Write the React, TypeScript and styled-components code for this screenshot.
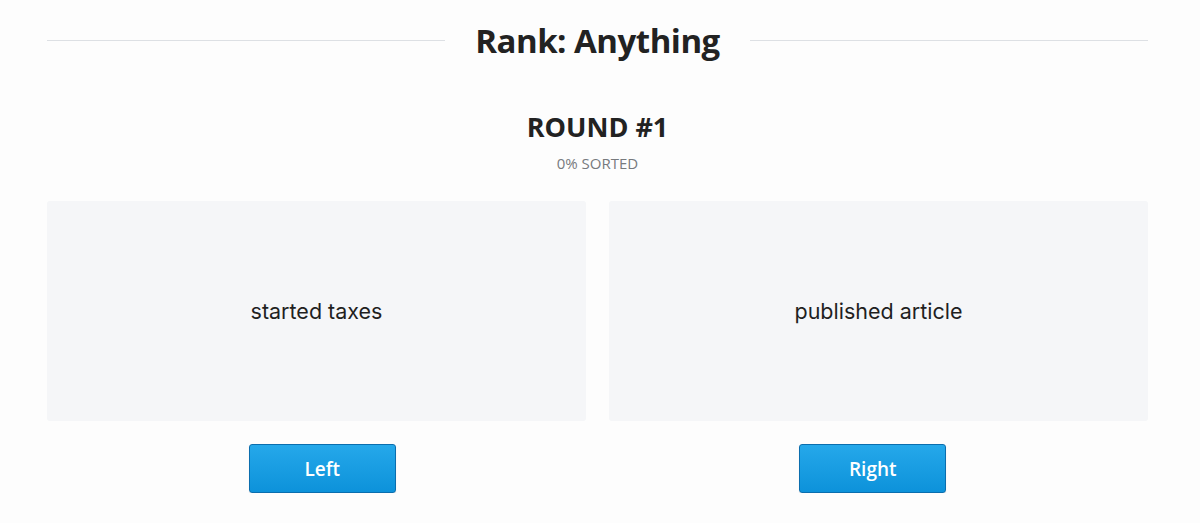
import React from 'react';
import styled, { createGlobalStyle } from 'styled-components';

const GlobalStyle = createGlobalStyle`
  html, body {
    margin: 0;
    padding: 0;
    background: #fdfdfd;
  }
  body {
    font-family: "Open Sans", "Liberation Sans", sans-serif;
    color: #222222;
  }
`;

const Page = styled.div`
  padding: 0 52px 0 47px;
`;

const Header = styled.div`
  display: flex;
  flex-direction: row;
  align-items: center;
  gap: 30px;
  height: 80px;
`;

const Rule = styled.div`
  flex: 1;
  height: 1px;
  background-color: #dde0e4;
`;

const Title = styled.h1`
  margin: 0;
  font-size: 33px;
  font-weight: 700;
  letter-spacing: -0.5px;
  color: #222222;
`;

const Round = styled.div`
  text-align: center;
  padding-top: 30px;
  h2 {
    margin: 0;
    font-size: 27px;
    font-weight: 700;
    line-height: 34px;
    color: #222222;
  }
`;

const Progress = styled.div`
  margin-top: 10px;
  font-size: 15px;
  line-height: 18px;
  color: #777a7e;
`;

const Choices = styled.div`
  display: grid;
  grid-template-columns: 1fr 1fr;
  gap: 23px;
  margin-top: 29px;
`;

const Card = styled.div`
  height: 220px;
  display: flex;
  align-items: center;
  justify-content: center;
  background-color: #f5f6f8;
  border-radius: 3px;
  font-family: Inter, "Open Sans", sans-serif;
  font-size: 21.5px;
  color: #1f1f1f;
`;

const Buttons = styled.div`
  display: flex;
  flex-direction: row;
  justify-content: space-around;
  margin-top: 23px;
`;

const Button = styled.button`
  width: 147px;
  height: 49px;
  border: 1px solid #0b6eae;
  border-radius: 3px;
  background: linear-gradient(#25a8ea, #0d92da);
  box-shadow: 0 1px 1px rgba(0, 0, 0, 0.15);
  color: #ffffff;
  font-family: "Open Sans", sans-serif;
  font-size: 19px;
  font-weight: 600;
  cursor: pointer;
`;

const items = ['started taxes', 'published article'];

export default function App() {
  return (
    <Page>
      <GlobalStyle />
      <Header>
        <Rule />
        <Title>Rank: Anything</Title>
        <Rule />
      </Header>
      <Round>
        <h2>ROUND #1</h2>
        <Progress>0% SORTED</Progress>
      </Round>
      <Choices>
        {items.map(item => (
          <Card key={item}>{item}</Card>
        ))}
      </Choices>
      <Buttons>
        <Button>Left</Button>
        <Button>Right</Button>
      </Buttons>
    </Page>
  );
}
